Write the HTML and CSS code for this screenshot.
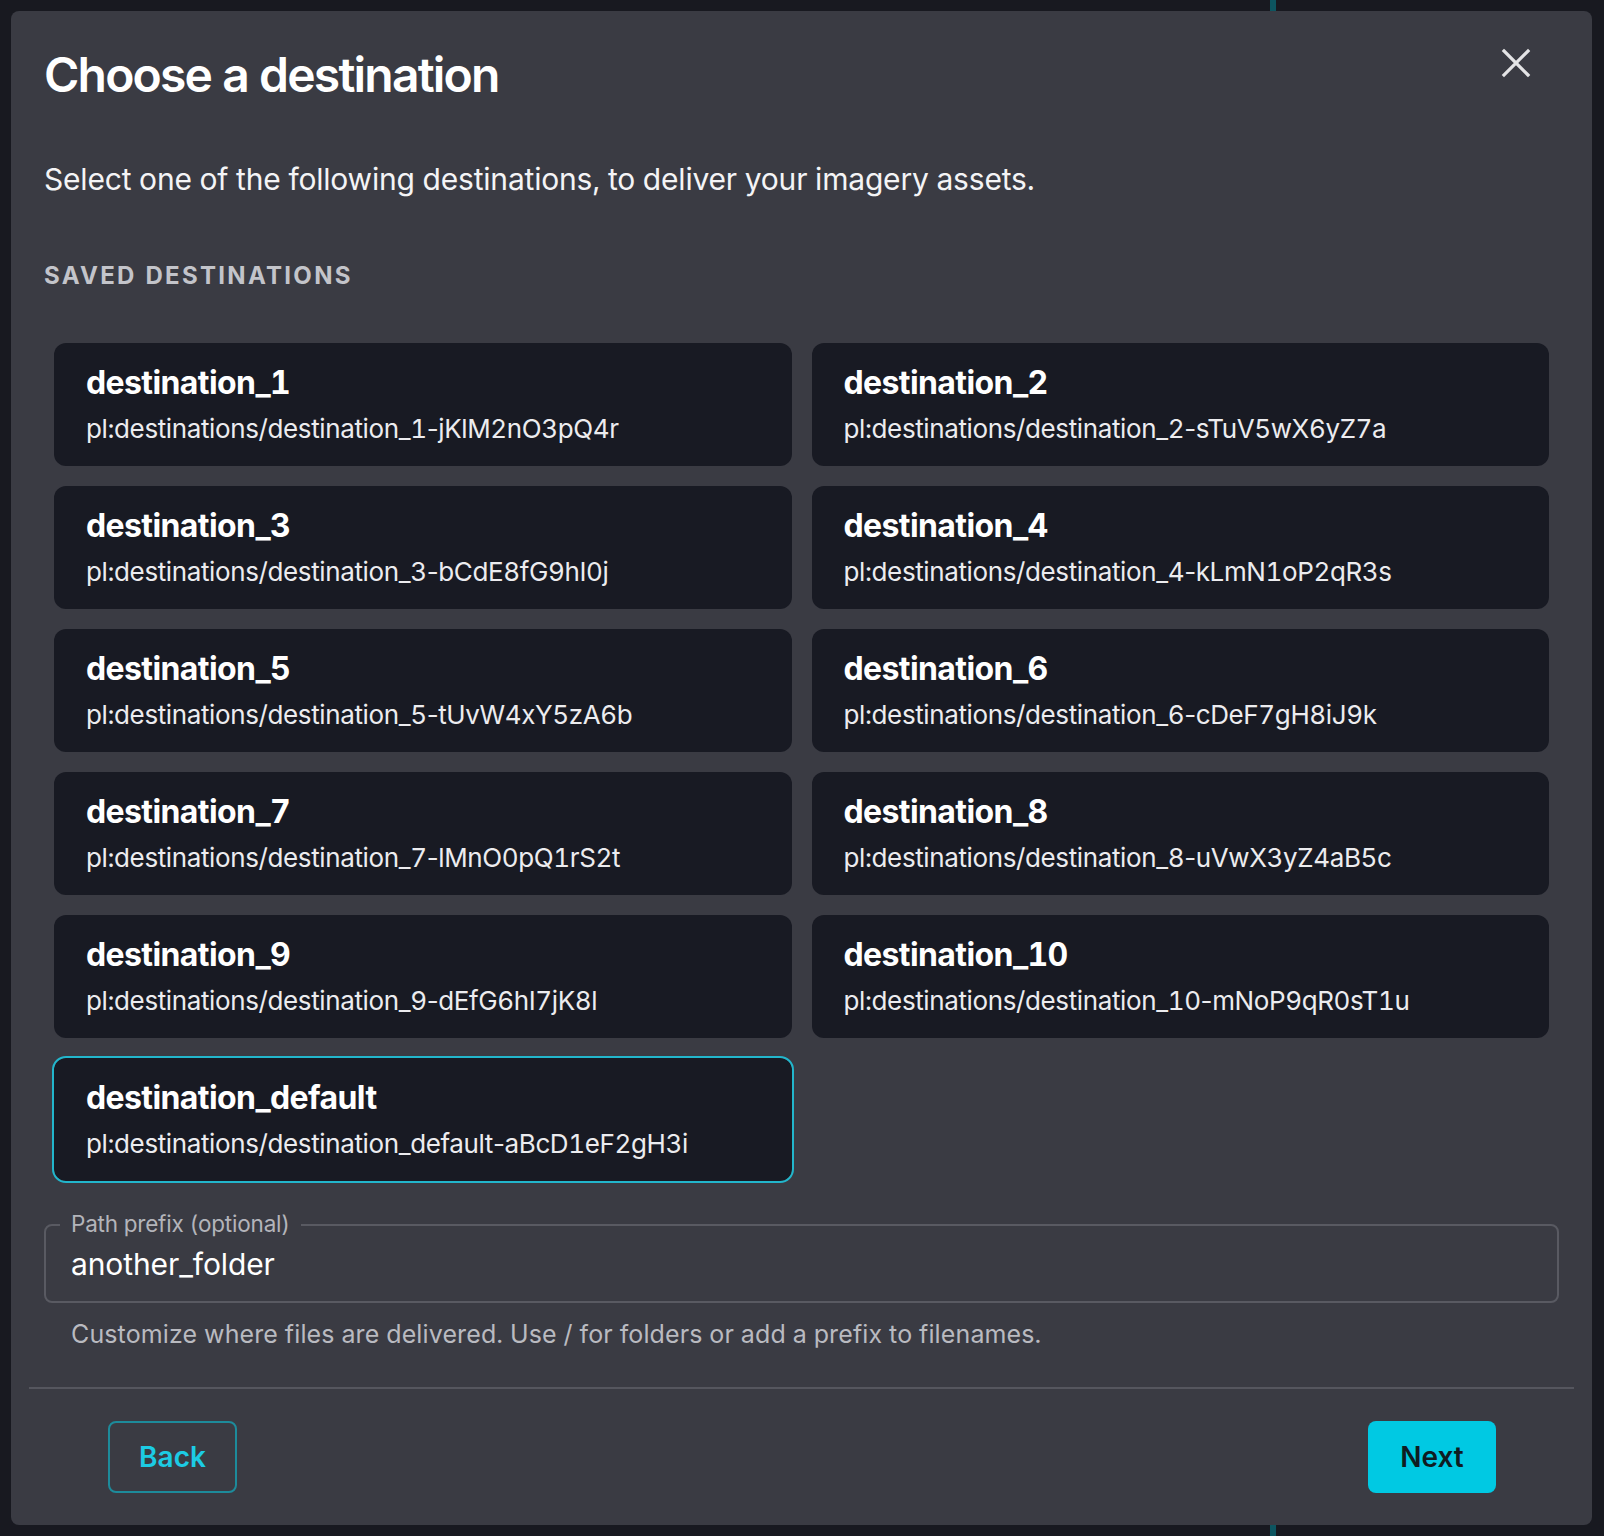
FILE: index.html
```html
<html>
<head>
    <title>Choose a destination</title>
    <meta name="viewport" content="width=device-width, initial-scale=1.0">
    <link rel="stylesheet" href="styles.css">
</head>
<body>
    <div class="backdrop-line"></div>

    <div class="dialog">
        <div class="dialog-header">
            <h1>Choose a destination</h1>
            <button class="close-btn" aria-label="Close">
                <svg width="30" height="30" viewBox="0 0 30 30">
                    <path d="M3 3 L27 27 M27 3 L3 27" stroke="#e4e4e6" stroke-width="3.2" stroke-linecap="square"/>
                </svg>
            </button>
        </div>

        <p class="intro">Select one of the following destinations, to deliver your imagery assets.</p>

        <h2 class="section-label">Saved destinations</h2>

        <div class="destinations">
            <div class="dest-card">
                <div class="dest-name">destination_1</div>
                <div class="dest-path">pl:destinations/destination_1<span class="sep">-</span>jKlM2nO3pQ4r</div>
            </div>
            <div class="dest-card">
                <div class="dest-name">destination_2</div>
                <div class="dest-path">pl:destinations/destination_2<span class="sep">-</span>sTuV5wX6yZ7a</div>
            </div>
            <div class="dest-card">
                <div class="dest-name">destination_3</div>
                <div class="dest-path">pl:destinations/destination_3<span class="sep">-</span>bCdE8fG9hI0j</div>
            </div>
            <div class="dest-card">
                <div class="dest-name">destination_4</div>
                <div class="dest-path">pl:destinations/destination_4<span class="sep">-</span>kLmN1oP2qR3s</div>
            </div>
            <div class="dest-card">
                <div class="dest-name">destination_5</div>
                <div class="dest-path">pl:destinations/destination_5<span class="sep">-</span>tUvW4xY5zA6b</div>
            </div>
            <div class="dest-card">
                <div class="dest-name">destination_6</div>
                <div class="dest-path">pl:destinations/destination_6<span class="sep">-</span>cDeF7gH8iJ9k</div>
            </div>
            <div class="dest-card">
                <div class="dest-name">destination_7</div>
                <div class="dest-path">pl:destinations/destination_7<span class="sep">-</span>lMnO0pQ1rS2t</div>
            </div>
            <div class="dest-card">
                <div class="dest-name">destination_8</div>
                <div class="dest-path">pl:destinations/destination_8<span class="sep">-</span>uVwX3yZ4aB5c</div>
            </div>
            <div class="dest-card">
                <div class="dest-name">destination_9</div>
                <div class="dest-path">pl:destinations/destination_9<span class="sep">-</span>dEfG6hI7jK8l</div>
            </div>
            <div class="dest-card">
                <div class="dest-name">destination_10</div>
                <div class="dest-path">pl:destinations/destination_10<span class="sep">-</span>mNoP9qR0sT1u</div>
            </div>
            <div class="dest-card selected">
                <div class="dest-name">destination_default</div>
                <div class="dest-path">pl:destinations/destination_default<span class="sep">-</span>aBcD1eF2gH3i</div>
            </div>
        </div>

        <div class="field">
            <span class="field-label">Path prefix (optional)</span>
            <input class="field-input" type="text" value="another_folder">
        </div>
        <p class="helper">Customize where files are delivered. Use / for folders or add a prefix to filenames.</p>

        <hr class="divider">

        <div class="dialog-actions">
            <button class="btn btn-outline">Back</button>
            <button class="btn btn-primary">Next</button>
        </div>
    </div>
</body>
</html>
```

FILE: styles.css
```css
body {
    font-family: Inter, "Noto Sans", sans-serif;
    font-feature-settings: "tnum";
    margin: 0;
    padding: 11px;
    background-color: #181920;
    color: #f2f2f4;
    overflow: hidden;
}
.backdrop-line {
    position: absolute;
    top: 0;
    bottom: 0;
    left: 1270px;
    width: 6px;
    background: #0d5560;
}
.dialog {
    position: relative;
    width: 1581px;
    box-sizing: border-box;
    background: #3a3b43;
    border-radius: 8px;
    padding: 35px 33px 32px 33px;
}
.dialog-header {
    display: flex;
    justify-content: space-between;
    align-items: flex-start;
    padding-right: 28px;
}
.dialog-header h1 {
    margin: 0;
    font-size: 48px;
    line-height: 58px;
    font-weight: 600;
    letter-spacing: -1.8px;
    color: #ffffff;
}
.close-btn {
    margin-top: 2px;
    background: none;
    border: none;
    padding: 0;
    width: 30px;
    height: 30px;
    cursor: pointer;
}
.intro {
    margin: 57px 0 0;
    font-size: 30px;
    line-height: 36px;
    letter-spacing: -0.2px;
    color: #f4f4f6;
}
.section-label {
    margin: 64px 0 0;
    font-size: 24px;
    line-height: 29px;
    font-weight: 700;
    letter-spacing: 2.3px;
    text-transform: uppercase;
    color: #c3c4ca;
}
.destinations {
    margin: 53px 10px 0;
    display: grid;
    grid-template-columns: 1fr 1fr;
    gap: 20px;
}
.dest-card {
    height: 123px;
    box-sizing: border-box;
    background: #181a23;
    border-radius: 12px;
    padding: 21px 32px 0;
}
.dest-card.selected {
    outline: 2px solid #22b6cc;
    outline-offset: 0;
}
.dest-name {
    font-size: 32px;
    line-height: 38px;
    font-weight: 700;
    letter-spacing: -0.6px;
    color: #ffffff;
}
.dest-path {
    margin-top: 10px;
    font-size: 26px;
    line-height: 34px;
    letter-spacing: -0.38px;
    color: #ececef;
}
.sep {
    font-feature-settings: normal;
}
.field {
    position: relative;
    margin-top: 43px;
    height: 79px;
    box-sizing: border-box;
    border: 2px solid #595a62;
    border-radius: 8px;
    display: flex;
    align-items: center;
    padding-left: 25px;
}
.field-label {
    position: absolute;
    top: -16px;
    left: 14px;
    padding: 0 11px;
    background: #3a3b43;
    font-size: 22.5px;
    line-height: 28px;
    letter-spacing: -0.2px;
    color: #b3b4ba;
}
.field-input {
    width: 100%;
    background: none;
    border: none;
    outline: none;
    padding: 0;
    font-family: inherit;
    font-size: 30px;
    line-height: 36px;
    letter-spacing: -0.1px;
    color: #ffffff;
}
.helper {
    margin: 16px 0 0 27px;
    font-size: 25px;
    line-height: 30px;
    letter-spacing: 0.12px;
    color: #b9bac0;
}
.divider {
    margin: 38px -15px 0 -15px;
    border: none;
    height: 2px;
    background: #55565e;
}
.dialog-actions {
    display: flex;
    justify-content: space-between;
    padding: 32px 63px 0 64px;
}
.btn {
    height: 72px;
    box-sizing: border-box;
    border-radius: 8px;
    font-family: inherit;
    font-size: 28px;
    font-weight: 600;
    cursor: pointer;
}
.btn-outline {
    width: 129px;
    background: none;
    border: 2px solid #1d8b9b;
    color: #1ccbe4;
}
.btn-primary {
    width: 128px;
    background: #00c9e3;
    border: none;
    color: #0f1c22;
}
```
